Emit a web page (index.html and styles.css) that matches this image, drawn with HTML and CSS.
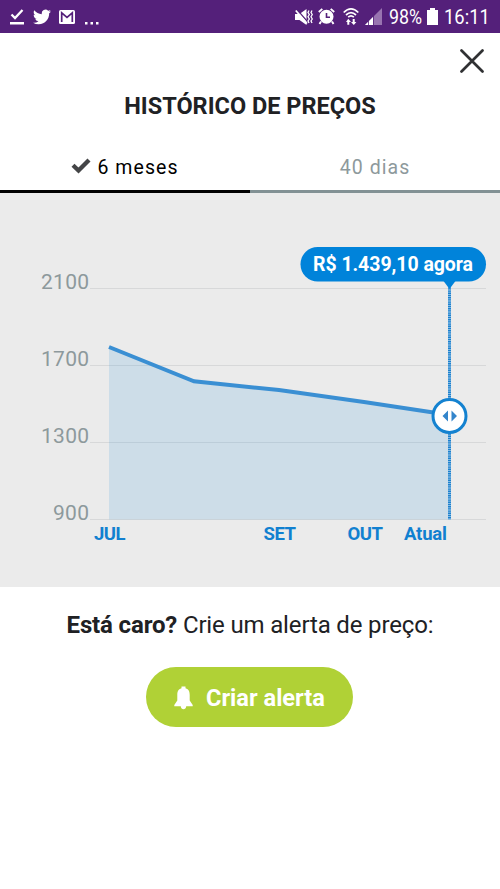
FILE: index.html
```html
<!DOCTYPE html>
<html lang="pt-BR">
<head>
<meta charset="utf-8">
<meta name="viewport" content="width=device-width, initial-scale=1">
<title>Histórico de preços</title>
<link rel="stylesheet" href="styles.css">
</head>
<body>
<div class="statusbar">
  <svg class="ic-download" width="14" height="16" viewBox="0 0 14 16"><path d="M1.500 5.500L5 9L12.500 1" fill="none" stroke="#fff" stroke-width="2.300"/><path d="M0 13h14v2.500H0z" fill="#fff"/></svg>
  <svg class="ic-twitter" width="18" height="16" viewBox="0 2 24 20"><path fill="#fff" d="M23.950 4.570a10 10 0 0 1-2.820.770 4.960 4.960 0 0 0 2.160-2.720c-.950.550-2 .950-3.130 1.180a4.920 4.920 0 0 0-8.380 4.480C7.690 8.090 4.070 6.130 1.640 3.160a4.820 4.820 0 0 0-.670 2.480c0 1.710.870 3.210 2.190 4.100a4.900 4.900 0 0 1-2.230-.620v.060a4.920 4.920 0 0 0 3.950 4.830 5 5 0 0 1-2.210.080 4.940 4.940 0 0 0 4.600 3.420A9.870 9.870 0 0 1 0 19.540a14 14 0 0 0 7.550 2.210c9.050 0 14-7.500 14-13.980 0-.210 0-.420-.020-.630a9.900 9.900 0 0 0 2.420-2.570z"/></svg>
  <svg class="ic-mail" width="16" height="14" viewBox="0 0 16 14"><rect width="16" height="14" rx="1.500" fill="#fff"/><path d="M2.700 12V2.800L8 7.300l5.300-4.500V12" fill="none" stroke="#54207a" stroke-width="1.700"/></svg>
  <svg class="ic-more" width="14" height="3" viewBox="0 0 14 3"><path d="M0 0h2.500v2.500H0zM5.500 0H8v2.500H5.500zM11 0h2.500v2.500H11z" fill="#fff"/></svg>
  <span class="spacer"></span>
  <svg class="ic-mute" width="18" height="16" viewBox="0 0 18 16"><path d="M0 5h4.500L11.500 0v16l-7-5H0z" fill="#fff"/><path d="M2 .8L13 13.300" stroke="#54207a" stroke-width="1.300"/><path d="M.8 1.500L12 14.500" stroke="#fff" stroke-width="1.800"/><path d="M14 1.500l-1 2 1.300 2-1.300 2.300 1.300 2.200-1.300 2 1 2M17 1.500l-1 2 1.300 2L16 7.800l1.300 2.200-1.300 2 1 2" fill="none" stroke="#fff" stroke-width="1.300"/></svg>
  <svg class="ic-alarm" width="17" height="17" viewBox="0 0 17 17"><circle cx="8.500" cy="8.800" r="7" fill="#fff"/><path d="M.8 4L4.300.900M16.200 4L12.700.900M3 13.500L1.500 16M14 13.500l1.500 2.500" stroke="#fff" stroke-width="1.900"/><path d="M8.500 5v4.200h3.500" fill="none" stroke="#54207a" stroke-width="1.600"/></svg>
  <svg class="ic-wifi" width="16" height="18" viewBox="0 0 16 18"><g fill="none" stroke="#fff" stroke-width="1.700"><path d="M.7 4.500Q8-2.800 15.300 4.500M3 7q5-4.600 10 0M5.200 9.200q2.800-2.600 5.600 0"/></g><path d="M5.200 10.800L8 14H6.300v2.800H4.300V14H3zM10.800 17L8 14h1.700v-3h2v3h1.700z" fill="#fff"/></svg>
  <svg class="ic-signal" width="17" height="17" viewBox="0 0 17 17"><path d="M17 0v17H0z" fill="#9874b0"/><path d="M8 9v8H0z" fill="#fff"/><path d="M3.500 12v5M8.500 7v10" stroke="#54207a" stroke-width=".8"/></svg>
  <span class="status-text battery-level">98%</span>
  <svg class="ic-battery" width="11" height="17" viewBox="0 0 11 17"><path d="M3 0h5v2h3v15H0V2h3z" fill="#fff"/></svg>
  <span class="status-text clock">16:11</span>
</div>

<div class="close-row">
  <svg width="24" height="24" viewBox="0 0 24 24"><path d="M1.500 1.500l21 21M22.500 1.500l-21 21" stroke="#303133" stroke-width="2.700" stroke-linecap="round"/></svg>
</div>

<h1 class="title">HISTÓRICO DE PREÇOS</h1>

<div class="tabs">
  <div class="tab tab-active"><svg class="check" width="20" height="16" viewBox="0 0 20 16"><path d="M2 7.200l5.500 5.300L18 2" fill="none" stroke="#444547" stroke-width="4.300"/></svg><span>6 meses</span></div>
  <div class="tab"><span>40 dias</span></div>
</div>

<svg class="chart" width="500" height="394" viewBox="0 193 500 394">
  <path d="M90 288.500H486M90 365.500H486M90 442.500H486M90 519.500H486" stroke="#d7d8d9"/>
  <path d="M109 347L194 381.300L279 390L364 402L450 415V519.500H109z" fill="#3498db" fill-opacity=".160"/>
  <path d="M109 347L194 381.300L279 390L364 402L450 415" fill="none" stroke="#3a8fd3" stroke-width="4"/>
  <path d="M449.500 286V519.500" stroke="#a9cfea" stroke-width="3"/>
  <path d="M449.500 286V519.500" stroke="#1c80cd" stroke-width="3" stroke-dasharray="1.400 .800"/>
  <rect x="300.500" y="247" width="185.500" height="34.500" rx="17.200" fill="#0083da"/>
  <path d="M443.500 281h12l-6 8z" fill="#0083da"/>
  <circle cx="449.500" cy="416" r="16.500" fill="#fff" stroke="#1482d0" stroke-width="3"/>
  <path d="M448 410.500v11l-5.500-5.500zM451.500 410.500v11l5.500-5.500z" fill="#3385cb"/>
  <text class="price" x="313" y="271" textLength="160">R$ 1.439,10 agora</text>
  <g class="y-labels">
    <text x="41" y="289" textLength="48">2100</text>
    <text x="41" y="366" textLength="48">1700</text>
    <text x="41" y="443" textLength="48">1300</text>
    <text x="53" y="520" textLength="36">900</text>
  </g>
  <g class="x-labels">
    <text x="94" y="540" textLength="31.500">JUL</text>
    <text x="263.500" y="540" textLength="32.500">SET</text>
    <text x="347.500" y="540" textLength="35.500">OUT</text>
    <text x="404" y="540" textLength="43">Atual</text>
  </g>
</svg>

<p class="prompt"><b>Está caro?</b> Crie um alerta de preço:</p>
<button class="alert-btn"><svg width="19" height="24" viewBox="0 0 19 24"><path d="M7.500 2.300V.500h4v1.800C15 3.200 15.700 6 15.700 9v5.500l3 4.500v1.300H12.200c0 4-5.400 4-5.400 0H.300V19l3-4.500V9c0-3 .7-5.800 4.200-6.700z" fill="#fff"/></svg><span>Criar alerta</span></button>
</body>
</html>
```

FILE: styles.css
```css
* { box-sizing: border-box; }
body {
  margin: 0;
  height: 889px;
  background: #fff;
  color: #202124;
  font-family: Roboto, "Liberation Sans", sans-serif;
  display: flex;
  flex-direction: column;
  align-items: center;
}
svg { display: block; flex: none; }
.statusbar {
  width: 100%;
  height: 33px;
  flex: none;
  padding: 0 12px 0 10px;
  display: flex;
  align-items: center;
  background: #54207a;
  color: #fff;
}
.ic-twitter { margin-left: 9px; }
.ic-mail { margin-left: 8px; }
.ic-more { margin: 13px 0 0 10px; }
.spacer { flex: 1; }
.ic-alarm { margin-left: 5px; }
.ic-wifi { margin-left: 8px; }
.ic-signal { margin-left: 6px; }
.status-text {
  font-size: 20px;
  line-height: 33px;
  transform-origin: left;
  white-space: nowrap;
  padding-top: 2px;
}
.battery-level { width: 33px; margin-left: 7px; transform: scaleX(.89); }
.ic-battery { margin-left: 5px; }
.clock { width: 44px; margin-left: 6px; transform: scaleX(.92); }
.close-row {
  width: 100%;
  height: 57px;
  flex: none;
  padding: 16px 16px 0 0;
  display: flex;
  justify-content: flex-end;
}
.title {
  margin: 0;
  height: 53px;
  flex: none;
  font-size: 23.500px;
  line-height: 33px;
  font-weight: 700;
}
.tabs { display: flex; width: 100%; flex: none; height: 50px; }
.tab {
  flex: 1;
  display: flex;
  align-items: center;
  justify-content: center;
  padding-top: 1px;
  font-size: 19.500px;
  letter-spacing: 1.050px;
  color: #8d999c;
  border-bottom: 3px solid #829194;
}
.tab-active { color: #000; border-color: #000; }
.check { margin: -2px 6px 0 0; }
.chart { background: #ebebeb; }
.price { fill: #fff; font-size: 19.500px; font-weight: 700; }
.y-labels { fill: #8d999c; font-size: 21px; }
.x-labels { fill: #1180d0; font-size: 18.500px; font-weight: 700; }
.prompt {
  margin: 22px 0 26px;
  font-size: 24px;
  letter-spacing: -.150px;
  line-height: 32px;
  white-space: nowrap;
}
.alert-btn {
  width: 207px;
  height: 60px;
  margin-right: 1px;
  border: 0;
  border-radius: 30px;
  padding: 1px 0 0;
  display: flex;
  align-items: center;
  justify-content: center;
  gap: 13px;
  background: #b0d136;
  color: #fff;
  font: 700 23.600px Roboto, "Liberation Sans", sans-serif;
}
```
